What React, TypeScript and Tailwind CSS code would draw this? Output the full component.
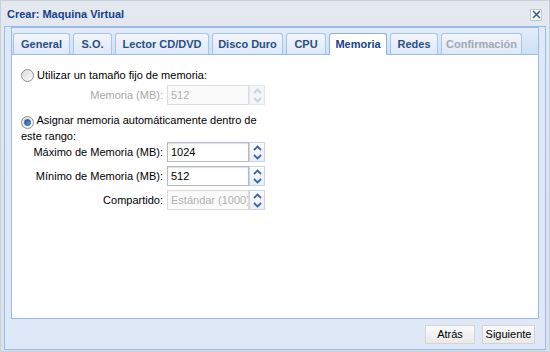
import React from "react";

const tabs = [
  { label: "General", w: "w-[57px]" },
  { label: "S.O.", w: "w-[39px]" },
  { label: "Lector CD/DVD", w: "w-[94px]" },
  { label: "Disco Duro", w: "w-[71px]" },
  { label: "CPU", w: "w-[40px]" },
  { label: "Memoria", w: "w-[58px]", active: true },
  { label: "Redes", w: "w-[48px]" },
  { label: "Confirmación", w: "w-[81px]", disabled: true },
];

function Radio({ checked }: { checked?: boolean }) {
  return (
    <span className="inline-flex h-[13px] w-[13px] shrink-0 items-center justify-center rounded-full border border-[#8e8f8f] bg-gradient-to-br from-[#dcdcdc] to-[#fbfbfb] align-[-2px]">
      {checked && <span className="h-[7px] w-[7px] rounded-full border border-[#1c4f96] bg-gradient-to-br from-[#1f5aa8] to-[#5aa0e8]" />}
    </span>
  );
}

function Spinner({ disabled }: { disabled?: boolean }) {
  const c = disabled ? "#c9d3de" : "#3a66a8";
  return (
    <div
      className={`flex h-[20px] w-[16px] flex-col items-center justify-center gap-[3px] border ${
        disabled ? "border-[#e3e6ea] bg-[#f4f5f6]" : "border-[#c8d4e4] bg-gradient-to-b from-[#fdfeff] to-[#e8eef7]"
      }`}
    >
      <svg width="9" height="6" viewBox="0 0 9 6">
        <path d="M1 5 L4.5 1.5 L8 5" fill="none" stroke={c} strokeWidth="1.8" />
      </svg>
      <svg width="9" height="6" viewBox="0 0 9 6">
        <path d="M1 1 L4.5 4.5 L8 1" fill="none" stroke={c} strokeWidth="1.8" />
      </svg>
    </div>
  );
}

function Field({ label, value, disabled }: { label: string; value: string; disabled?: boolean }) {
  return (
    <div className="flex h-[20px] items-center">
      <span className={`w-[146px] pr-[4px] text-right ${disabled ? "text-[#a6a6a6]" : "text-black"}`}>{label}</span>
      <div
        className={`flex h-[20px] w-[82px] items-center overflow-hidden whitespace-nowrap border px-[3px] ${
          disabled
            ? "border-[#dcdcdc] bg-[#fafafa] text-[#b0b0b0]"
            : "border-[#b5b8c8] bg-white text-black shadow-[inset_0_1px_1px_#e0e0e0]"
        }`}
      >
        {value}
      </div>
      <Spinner disabled={disabled && label === "Memoria (MB):"} />
    </div>
  );
}

export default function App() {
  return (
    <div className="h-[352px] w-[550px] overflow-hidden bg-[#c9d1db] p-[1px] font-['Liberation_Sans',Arial,sans-serif] text-[11px]">
      <div className="flex h-full flex-col bg-gradient-to-b from-[#e4e9ef] to-[#d9e1ea] px-[3px]">
        {/* title bar */}
        <div className="flex h-[25px] shrink-0 items-center justify-between pl-[3px] pr-[4px] pt-[2px]">
          <span className="text-[11px] font-bold text-[#15428b]">Crear: Maquina Virtual</span>
          <button className="flex h-[12px] w-[12px] items-center justify-center border border-[#b9c9e0] bg-white">
            <svg width="9" height="9" viewBox="0 0 9 9">
              <path d="M1 1 L8 8 M8 1 L1 8" stroke="#2b5ba5" strokeWidth="1.5" />
            </svg>
          </button>
        </div>

        {/* body */}
        <div className="flex flex-1 flex-col border border-[#99bbe8] bg-[#dfe8f6] px-[6px]">
          <div className="flex flex-1 flex-col border border-[#99bbe8] bg-white">
            {/* tab strip */}
            <div className="flex h-[27px] shrink-0 items-end gap-[3px] border-b border-[#99bbe8] bg-gradient-to-b from-[#e4edf9] to-[#cfdff4] px-[1px]">
              {tabs.map((t) => (
                <div
                  key={t.label}
                  className={`flex h-[21px] ${t.w} items-center justify-center rounded-t-[3px] border border-b-0 text-[11px] font-bold ${
                    t.active
                      ? "relative -mb-[1px] h-[22px] border-[#8db2e3] bg-white text-[#15428b]"
                      : t.disabled
                      ? "border-[#a7c3ea] bg-gradient-to-b from-[#f2f6fc] to-[#dde8f7] text-[#a3a8b0]"
                      : "border-[#a7c3ea] bg-gradient-to-b from-[#f2f6fc] to-[#dde8f7] text-[#2a4e86]"
                  }`}
                >
                  {t.label}
                </div>
              ))}
            </div>

            {/* content */}
            <div className="flex flex-1 flex-col pl-[9px] pt-[13px] text-black">
              <label className="flex h-[14px] items-center gap-[3px] leading-[14px]">
                <Radio />
                <span>Utilizar un tamaño fijo de memoria:</span>
              </label>
              <div className="mt-[3px]">
                <Field label="Memoria (MB):" value="512" disabled />
              </div>

              <p className="mt-[8px] w-[240px] leading-[15px]">
                <Radio checked /> Asignar memoria automáticamente dentro de este rango:
              </p>

              <div className="-mt-[2px] flex flex-col gap-[4px]">
                <Field label="Máximo de Memoria (MB):" value="1024" />
                <Field label="Mínimo de Memoria (MB):" value="512" />
                <div className="flex h-[20px] items-center">
                  <span className="w-[146px] pr-[4px] text-right">Compartido:</span>
                  <div className="flex h-[20px] w-[82px] items-center overflow-hidden whitespace-nowrap border border-[#dcdcdc] bg-[#fafafa] px-[3px] text-[#b0b0b0]">
                    Estándar (1000)
                  </div>
                  <Spinner />
                </div>
              </div>
            </div>
          </div>

          {/* footer */}
          <div className="flex h-[30px] shrink-0 items-start justify-end gap-[7px] pr-[4px] pt-[6px]">
            <button className="h-[19px] w-[50px] border border-[#d4d4d4] bg-gradient-to-b from-[#fbfbfb] to-[#e9e9e9] text-[11px] text-black">
              Atrás
            </button>
            <button className="h-[19px] w-[53px] border border-[#d4d4d4] bg-gradient-to-b from-[#fbfbfb] to-[#e9e9e9] text-[11px] text-black">
              Siguiente
            </button>
          </div>
        </div>
        <div className="h-[1px] shrink-0" />
      </div>
    </div>
  );
}
